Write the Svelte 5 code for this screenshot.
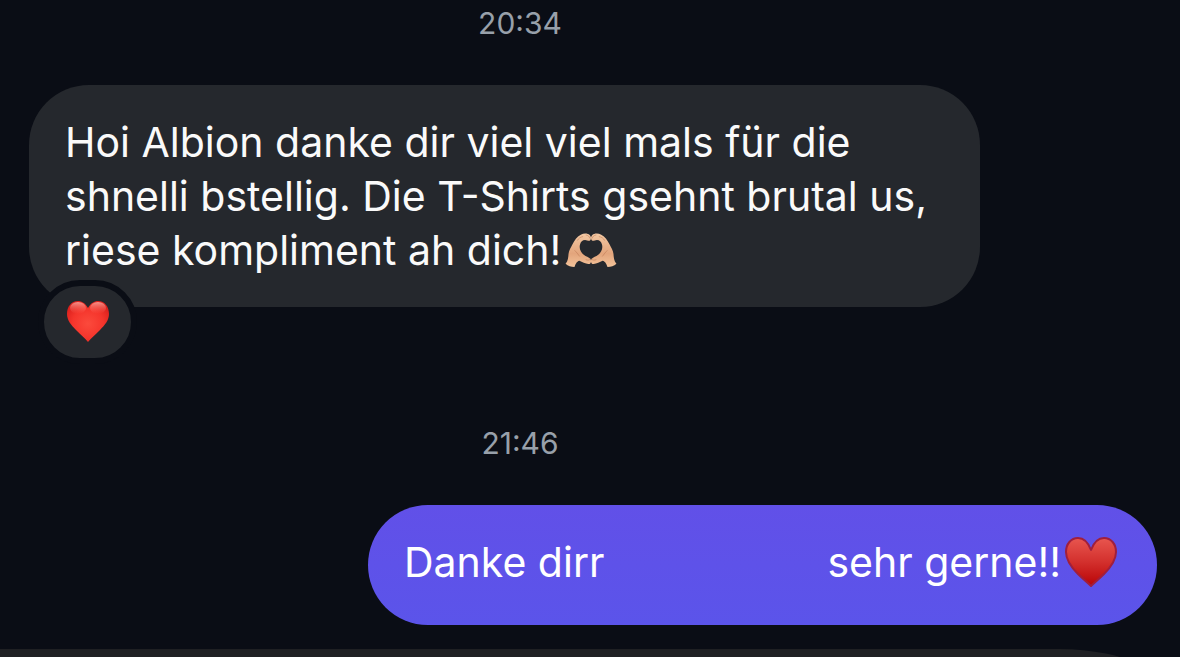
<script>
  const received = {
    time: '20:34',
    text: 'Hoi Albion danke dir viel viel mals für die shnelli bstellig. Die T-Shirts gsehnt brutal us, riese kompliment ah dich!'
  };

  const sent = {
    time: '21:46',
    start: 'Danke dirr',
    end: 'sehr gerne!!'
  };
</script>

<main class="thread">
  <time class="stamp">{received.time}</time>

  <div class="row">
    <div class="bubble received">
      {received.text}<svg class="hands" viewBox="45 38 156 106" role="img" aria-label="Heart hands">
        <defs>
          <linearGradient id="skin" x1="0" y1="0" x2="0" y2="1">
            <stop offset="0" stop-color="#f3c9a4" />
            <stop offset="0.6" stop-color="#e3a57c" />
            <stop offset="1" stop-color="#f3c39a" />
          </linearGradient>
          <g id="hand">
            <path
              fill="url(#skin)"
              d="M46 131C54 122 54 112 55 101C56 91 62 82 67 72C73 60 80 49 92 43C101 38 113 38 119 44C124 49 124 57 120 61C115 63 111 59 105 59C97 59 92 64 90 72C86 85 92 96 101 104C108 110 116 111 121 116C126 124 122 133 115 132C106 131 96 126 88 122C79 124 76 133 73 141C63 141 53 138 46 131Z"
            />
            <path
              class="crease"
              d="M82 60C85 54 91 50 98 49M108 44C114 45 118 48 119 53M74 91C79 96 84 102 88 108M108 119C113 121 117 121 120 118"
            />
          </g>
        </defs>
        <use href="#hand" />
        <use href="#hand" transform="translate(246 0) scale(-1 1)" />
      </svg>
    </div>
    <button class="reaction" aria-label="Heart reaction">
      <svg viewBox="0 0 42 42" aria-hidden="true">
        <defs>
          <radialGradient id="bright" cx="0.5" cy="0.55" r="0.6">
            <stop offset="0" stop-color="#fb4a3c" />
            <stop offset="0.6" stop-color="#f5352c" />
            <stop offset="1" stop-color="#dc201c" />
          </radialGradient>
          <linearGradient id="shine" x1="0" y1="0" x2="0" y2="1">
            <stop offset="0" stop-color="#ffc4bc" stop-opacity="0.7" />
            <stop offset="1" stop-color="#ff6a5c" stop-opacity="0" />
          </linearGradient>
        </defs>
        <path
          fill="url(#bright)"
          d="M21 7C18 2 15 0 11 0C4 0 0 6 0 13C0 19 4 24 9 29C14 34 18 37 21 41C24 37 28 34 33 29C38 24 42 19 42 13C42 6 38 0 31 0C27 0 24 2 21 7Z"
        />
        <ellipse fill="url(#shine)" cx="11" cy="7" rx="8" ry="6" />
        <ellipse fill="url(#shine)" cx="31" cy="7" rx="8" ry="6" />
      </svg>
    </button>
  </div>

  <time class="stamp later">{sent.time}</time>

  <div class="bubble sent">
    <span>{sent.start}</span>
    <span class="ending">
      {sent.end}
      <svg class="heart" viewBox="0 0 52 50" role="img" aria-label="Heart">
        <defs>
          <linearGradient id="deep" x1="0" y1="0" x2="0" y2="1">
            <stop offset="0" stop-color="#e8564f" />
            <stop offset="0.5" stop-color="#d3302d" />
            <stop offset="1" stop-color="#b90306" />
          </linearGradient>
        </defs>
        <path
          fill="url(#deep)"
          stroke="#a01f3d"
          stroke-width="2"
          stroke-linejoin="round"
          d="M26 13C23 5 19 1 13 1C6 1 1 7 1 15C1 23 6 30 13 37C18 42 22 45 26 49C30 45 34 42 39 37C46 30 51 23 51 15C51 7 46 1 39 1C33 1 29 5 26 13Z"
        />
      </svg>
    </span>
  </div>

  <div class="bubble next"></div>
</main>

<style>
  :global(body) {
    margin: 0;
    background: #0a0d15;
  }
  .thread {
    display: flex;
    flex-direction: column;
    box-sizing: border-box;
    height: 100vh;
    overflow: hidden;
    font-family: Inter, 'Liberation Sans', sans-serif;
    color: #fafafa;
  }
  .stamp {
    flex-shrink: 0;
    padding-right: 140px;
    font-size: 30px;
    line-height: 46px;
    text-align: center;
    color: #98a0aa;
  }
  .later {
    margin-top: 62px;
  }
  .row {
    flex-shrink: 0;
    margin-top: 39px;
    padding: 0 200px 0 29px;
  }
  .bubble {
    flex-shrink: 0;
    border-radius: 60px;
    font-size: 41px;
    line-height: 54px;
  }
  .received {
    padding: 30px 36px;
    background: #25282d;
  }
  .hands {
    width: 52px;
    height: 35px;
    margin-left: 4px;
    vertical-align: -3px;
  }
  .crease {
    fill: none;
    stroke: #b9744f;
    stroke-width: 3;
    stroke-linecap: round;
    opacity: 0.5;
  }
  .reaction {
    position: relative;
    display: flex;
    align-items: center;
    justify-content: center;
    box-sizing: content-box;
    width: 87px;
    height: 72px;
    margin: -27px 0 -6px 9px;
    padding: 0;
    border: 6px solid #0a0d15;
    border-radius: 42px;
    background: #25282d;
    cursor: pointer;
  }
  .reaction svg {
    width: 42px;
    height: 42px;
  }
  .sent {
    display: flex;
    align-self: flex-end;
    justify-content: space-between;
    gap: 223px;
    margin: 39px 23px 0 0;
    padding: 30px 40px 36px 36px;
    background: linear-gradient(#6150e8, #5b54ea);
    color: #ffffff;
  }
  .ending {
    display: flex;
    align-items: center;
    gap: 4px;
  }
  .heart {
    width: 52px;
    height: 50px;
  }
  .next {
    height: 120px;
    margin-top: 24px;
    border-radius: 0 120px 120px 0 / 0 60px 60px 0;
    background: #1f2023;
  }
</style>
